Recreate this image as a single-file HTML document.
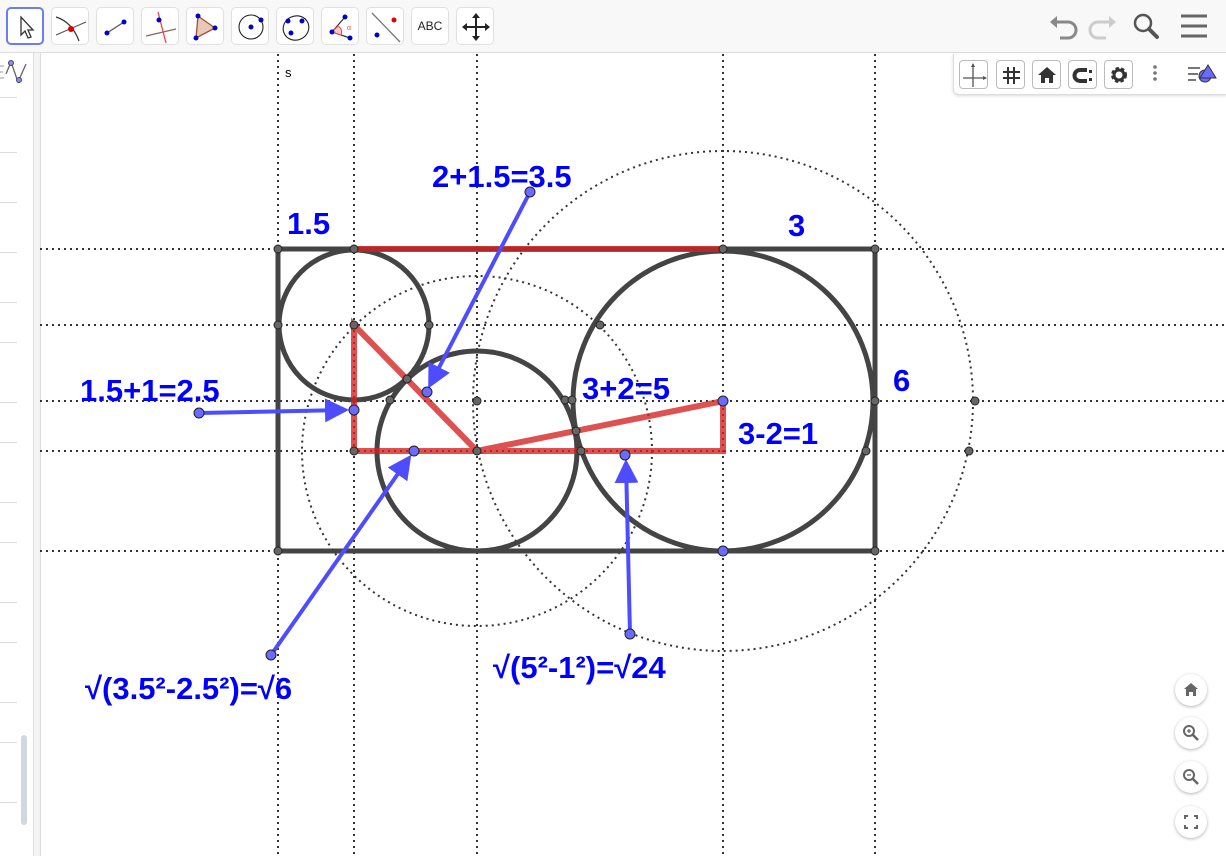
<!DOCTYPE html>
<html><head><meta charset="utf-8"><style>
body{margin:0;width:1226px;height:856px;overflow:hidden;background:#fff;font-family:"Liberation Sans",sans-serif;position:relative}
.tb{position:absolute;left:0;top:0;width:1226px;height:52px;background:#f8f8f8;border-bottom:1px solid #ddd}
.btn{position:absolute;top:7px;width:38px;height:38px;border:1px solid #e0e0e0;border-radius:5px;background:#fff;box-sizing:border-box}
.btn svg{position:absolute;left:0;top:0}
.zb{position:absolute;left:1175px;width:32px;height:32px;border-radius:50%;background:#fff;box-shadow:0 1px 3px rgba(0,0,0,.3)}
.sb{position:absolute;top:60px;width:29px;height:29px;border:1px solid #bbb;border-radius:4px;background:#fff;box-sizing:border-box}
</style></head><body>
<div class="tb">
<div class="btn" style="left:6px;border:2px solid #6c7cf5"><svg width="34" height="34"><path d="M13 8 L13 26 L17 22 L20 29 L23 28 L20 21 L25 21 Z" fill="#fff" stroke="#333" stroke-width="1.3"/></svg></div>
<div class="btn" style="left:51px"><svg width="38" height="38"><path d="M4 9 Q20 14 27 33" stroke="#333" fill="none" stroke-width="1.2"/><path d="M4 27 L34 14" stroke="#555" stroke-width="1.2"/><circle cx="19" cy="21" r="3" fill="#d00"/></svg></div>
<div class="btn" style="left:96px"><svg width="38" height="38"><path d="M10 25 L27 14" stroke="#555" stroke-width="1.3"/><circle cx="10" cy="25" r="2.5" fill="#00c"/><circle cx="27" cy="14" r="2.5" fill="#00c"/></svg></div>
<div class="btn" style="left:141px"><svg width="38" height="38"><path d="M4 28 L34 21" stroke="#866" stroke-width="1.3"/><path d="M16 4 L24 35" stroke="#e44" stroke-width="1.3"/><circle cx="17" cy="12" r="2.5" fill="#00c"/></svg></div>
<div class="btn" style="left:186px"><svg width="38" height="38"><path d="M11 8 L28 20 L9 30 Z" fill="#e8c8b8" stroke="#a05030" stroke-width="1.3"/><circle cx="11" cy="8" r="2.5" fill="#00c"/><circle cx="28" cy="20" r="2.5" fill="#00c"/><circle cx="9" cy="30" r="2.5" fill="#00c"/></svg></div>
<div class="btn" style="left:231px"><svg width="38" height="38"><circle cx="19" cy="19" r="12" fill="none" stroke="#222" stroke-width="1.1"/><circle cx="19" cy="19" r="2.5" fill="#00c"/><circle cx="29" cy="12" r="2.5" fill="#00c"/></svg></div>
<div class="btn" style="left:276px"><svg width="38" height="38"><ellipse cx="19" cy="20" rx="13" ry="12" transform="rotate(-25 19 20)" fill="none" stroke="#222" stroke-width="1.1"/><circle cx="11" cy="13" r="2.5" fill="#00c"/><circle cx="25" cy="13" r="2.5" fill="#00c"/><circle cx="14" cy="25" r="2.5" fill="#00c"/></svg></div>
<div class="btn" style="left:321px"><svg width="38" height="38"><path d="M23 9 L10 24 L28 30" stroke="#333" fill="none" stroke-width="1.2"/><path d="M16 18 Q21 21 19 27 L10 24Z" fill="#f8c8c8" stroke="#e44"/><text x="25" y="22" font-size="7" fill="#e44">α</text><circle cx="23" cy="9" r="2.5" fill="#00c"/><circle cx="10" cy="24" r="2.5" fill="#00c"/><circle cx="28" cy="30" r="2.5" fill="#00c"/></svg></div>
<div class="btn" style="left:366px"><svg width="38" height="38"><path d="M5 5 L33 34" stroke="#777" stroke-width="1.3"/><circle cx="27" cy="12" r="2.5" fill="#d00"/><circle cx="10" cy="27" r="2.5" fill="#00c"/></svg></div>
<div class="btn" style="left:411px"><div style="position:absolute;left:0;width:36px;top:11px;text-align:center;font-size:12px;color:#222">ABC</div></div>
<div class="btn" style="left:456px"><svg width="38" height="38"><path d="M19 7 V31 M7 19 H31" stroke="#222" stroke-width="2"/><path d="M19 5 L15 10 H23Z M19 33 L15 28 H23Z M5 19 L10 15 V23Z M33 19 L28 15 V23Z" fill="#222"/></svg></div>
<svg style="position:absolute;left:1040px;top:10px" width="186" height="34"><path d="M14 12 H28 A8 8 0 0 1 28 28 H20" stroke="#888" stroke-width="3" fill="none"/><path d="M10 12 L17 6 V18 Z" fill="#888"/><path d="M72 12 H58 A8 8 0 0 0 58 28 H66" stroke="#ccc" stroke-width="3" fill="none"/><path d="M76 12 L69 6 V18 Z" fill="#ccc"/><circle cx="103" cy="13" r="8" stroke="#555" stroke-width="2.5" fill="none"/><path d="M109 19 L117 27" stroke="#555" stroke-width="4" stroke-linecap="round"/><path d="M141 6 H167 M141 16 H167 M141 26 H167" stroke="#666" stroke-width="3"/></svg>
</div>
<div style="position:absolute;left:0;top:53px;width:33px;height:803px;background:#fff"></div>
<div style="position:absolute;left:33px;top:53px;width:6px;height:803px;background:#f3f3f3;border-left:1px solid #ddd;border-right:1px solid #ddd"></div>
<div style="position:absolute;left:21px;top:735px;width:6px;height:90px;background:#d0d8e0;border-radius:3px"></div>
<svg style="position:absolute;left:0;top:58px" width="33" height="32"><path d="M0 8 H4 M0 14 H3 M0 20 H4" stroke="#999"/><path d="M6 16 L11 4 L18 24 L26 6" stroke="#666" fill="none" stroke-width="1.3"/><circle cx="11" cy="5" r="2.5" fill="#88f" stroke="#446"/><circle cx="19" cy="22" r="2.5" fill="#88f" stroke="#446"/></svg>
<div style="position:absolute;left:0;top:97px;width:17px;height:1px;background:#ddd;box-shadow:0 55px #ddd,0 105px #ddd,0 155px #ddd,0 205px #ddd,0 245px #ddd,0 305px #ddd,0 345px #ddd,0 405px #ddd,0 445px #ddd,0 505px #ddd,0 545px #ddd,0 605px #ddd,0 645px #ddd,0 705px #ddd"></div>

<svg style="position:absolute;left:0;top:0" width="1226" height="856">
<defs><marker id="ah" markerWidth="6" markerHeight="6" refX="5" refY="3" orient="auto" markerUnits="strokeWidth"><path d="M0 0 L6 3 L0 6 Z" fill="#4d4dff"/></marker></defs>
<g stroke="#333" stroke-width="2" stroke-dasharray="2 4" fill="none">
<path d="M278 54 V856 M354 54 V856 M477 54 V856 M723 54 V856 M875 54 V856"/>
<path d="M40 249 H1226 M40 325 H1226 M40 401 H1226 M40 451 H1226 M40 551 H1226"/>
<circle cx="477" cy="451" r="175"/><circle cx="723" cy="401" r="250"/>
</g>
<text x="285" y="77" font-size="13" fill="#000" font-family="Liberation Sans">s</text>
<g stroke="#444" stroke-width="5" fill="none">
<rect x="278" y="249" width="597" height="302"/>
<circle cx="354" cy="325" r="75"/><circle cx="477" cy="451" r="100"/><circle cx="723" cy="401" r="150"/>
</g>
<g stroke="#d42020" stroke-opacity=".78" stroke-width="6" fill="none">
<path d="M354 249 H723"/><path d="M354 325 V451 H477 Z"/><path d="M477 451 L723 401 V451 H477"/>
</g>
<g stroke="#4d4dff" stroke-width="4" fill="none" marker-end="url(#ah)">
<path d="M530 192 L430 385"/><path d="M199 413 L345 410"/><path d="M271 655 L409 458"/><path d="M630 634 L626 463"/>
</g>
<g fill="#666" stroke="#222" stroke-width="1">
<circle cx="278" cy="249" r="4"/><circle cx="354" cy="249" r="4"/><circle cx="723" cy="249" r="4"/><circle cx="875" cy="249" r="4"/>
<circle cx="278" cy="325" r="4"/><circle cx="354" cy="325" r="4"/><circle cx="429" cy="325" r="4"/><circle cx="600" cy="325" r="4"/>
<circle cx="390" cy="400" r="4"/><circle cx="477" cy="401" r="4"/><circle cx="565" cy="400" r="4"/><circle cx="572" cy="400" r="4"/><circle cx="875" cy="401" r="4"/><circle cx="975" cy="401" r="4"/>
<circle cx="407" cy="379" r="4"/><circle cx="576" cy="431" r="4"/>
<circle cx="354" cy="451" r="4"/><circle cx="477" cy="451" r="4"/><circle cx="581" cy="451" r="4"/><circle cx="866" cy="451" r="4"/><circle cx="969" cy="451" r="4"/>
<circle cx="278" cy="551" r="4"/><circle cx="875" cy="551" r="4"/>
</g>
<g fill="#6b6bff" stroke="#222" stroke-width="1">
<circle cx="427" cy="392" r="5"/><circle cx="354" cy="410" r="5"/><circle cx="414" cy="451" r="5"/><circle cx="625" cy="455" r="5"/><circle cx="723" cy="401" r="5"/><circle cx="723" cy="551" r="5"/>
<circle cx="530" cy="192" r="5"/><circle cx="199" cy="413" r="5"/><circle cx="271" cy="655" r="5"/><circle cx="630" cy="634" r="5"/>
</g>
<g fill="#0000ff" font-weight="bold" font-size="31" font-family="Liberation Sans">
<text x="287" y="234">1.5</text><text x="432" y="187">2+1.5=3.5</text><text x="80" y="401">1.5+1=2.5</text>
<text x="582" y="399">3+2=5</text><text x="738" y="444">3-2=1</text><text x="788" y="236">3</text><text x="893" y="391">6</text>
<text x="85" y="699">√(3.5²-2.5²)=√6</text><text x="493" y="678">√(5²-1²)=√24</text>
</g>
</svg>

<div style="position:absolute;left:953px;top:54px;width:273px;height:40px;background:#fff;border-left:1px solid #ddd;border-bottom:1px solid #ddd;border-radius:0 0 0 6px;box-shadow:0 1px 3px rgba(0,0,0,.15)"></div>
<div class="sb" style="left:959px"><svg width="29" height="29"><path d="M13 3 V26 M3 17 H26" stroke="#555" stroke-width="1.3"/><path d="M13 2 L11 6 H15Z M27 17 L23 15 V19Z" fill="#555"/></svg></div>
<div class="sb" style="left:996px"><svg width="29" height="29"><path d="M11 6 V23 M17 6 V23 M6 11 H23 M6 17 H23" stroke="#333" stroke-width="2"/></svg></div>
<div class="sb" style="left:1032px"><svg width="29" height="29"><path d="M14 6 L5 14 H8 V22 H12 V17 H16 V22 H20 V14 H23 Z" fill="#333"/></svg></div>
<div class="sb" style="left:1068px"><svg width="29" height="29"><path d="M18 9 H11 A5 5 0 0 0 11 20 H18" stroke="#333" stroke-width="4" fill="none"/><rect x="20" y="9" width="3" height="3" fill="#333"/><rect x="20" y="17" width="3" height="3" fill="#333"/></svg></div>
<div class="sb" style="left:1104px"><svg width="29" height="29"><circle cx="14" cy="14" r="6" fill="none" stroke="#333" stroke-width="4" stroke-dasharray="3 2"/><circle cx="14" cy="14" r="5" fill="none" stroke="#333" stroke-width="3"/><circle cx="14" cy="14" r="2" fill="#fff"/></svg></div>
<svg style="position:absolute;left:1150px;top:63px" width="76" height="24"><circle cx="5" cy="4" r="1.8" fill="#777"/><circle cx="5" cy="10" r="1.8" fill="#777"/><circle cx="5" cy="16" r="1.8" fill="#777"/><path d="M38 5 H50 M38 11 H48 M38 17 H46" stroke="#777" stroke-width="2"/><circle cx="55" cy="13" r="6" fill="#6b6bff" stroke="#333"/><path d="M58 2 L66 15 H50 Z" fill="#6b6bff" stroke="#333"/></svg>

<div class="zb" style="top:674px"><svg width="32" height="32"><path d="M16 9 L9 15 H11 V22 H14 V18 H18 V22 H21 V15 H23 Z" fill="#666"/></svg></div>
<div class="zb" style="top:717px"><svg width="32" height="32"><circle cx="14" cy="14" r="5" stroke="#666" stroke-width="2" fill="none"/><path d="M18 18 L23 23" stroke="#666" stroke-width="2.5"/><path d="M12 14 H16 M14 12 V16" stroke="#666" stroke-width="1.3"/></svg></div>
<div class="zb" style="top:761px"><svg width="32" height="32"><circle cx="14" cy="14" r="5" stroke="#666" stroke-width="2" fill="none"/><path d="M18 18 L23 23" stroke="#666" stroke-width="2.5"/><path d="M12 14 H16" stroke="#666" stroke-width="1.3"/></svg></div>
<div class="zb" style="top:806px"><svg width="32" height="32"><path d="M10 13 V10 H13 M19 10 H22 V13 M22 19 V22 H19 M13 22 H10 V19" stroke="#666" stroke-width="2" fill="none"/></svg></div>
</body></html>
